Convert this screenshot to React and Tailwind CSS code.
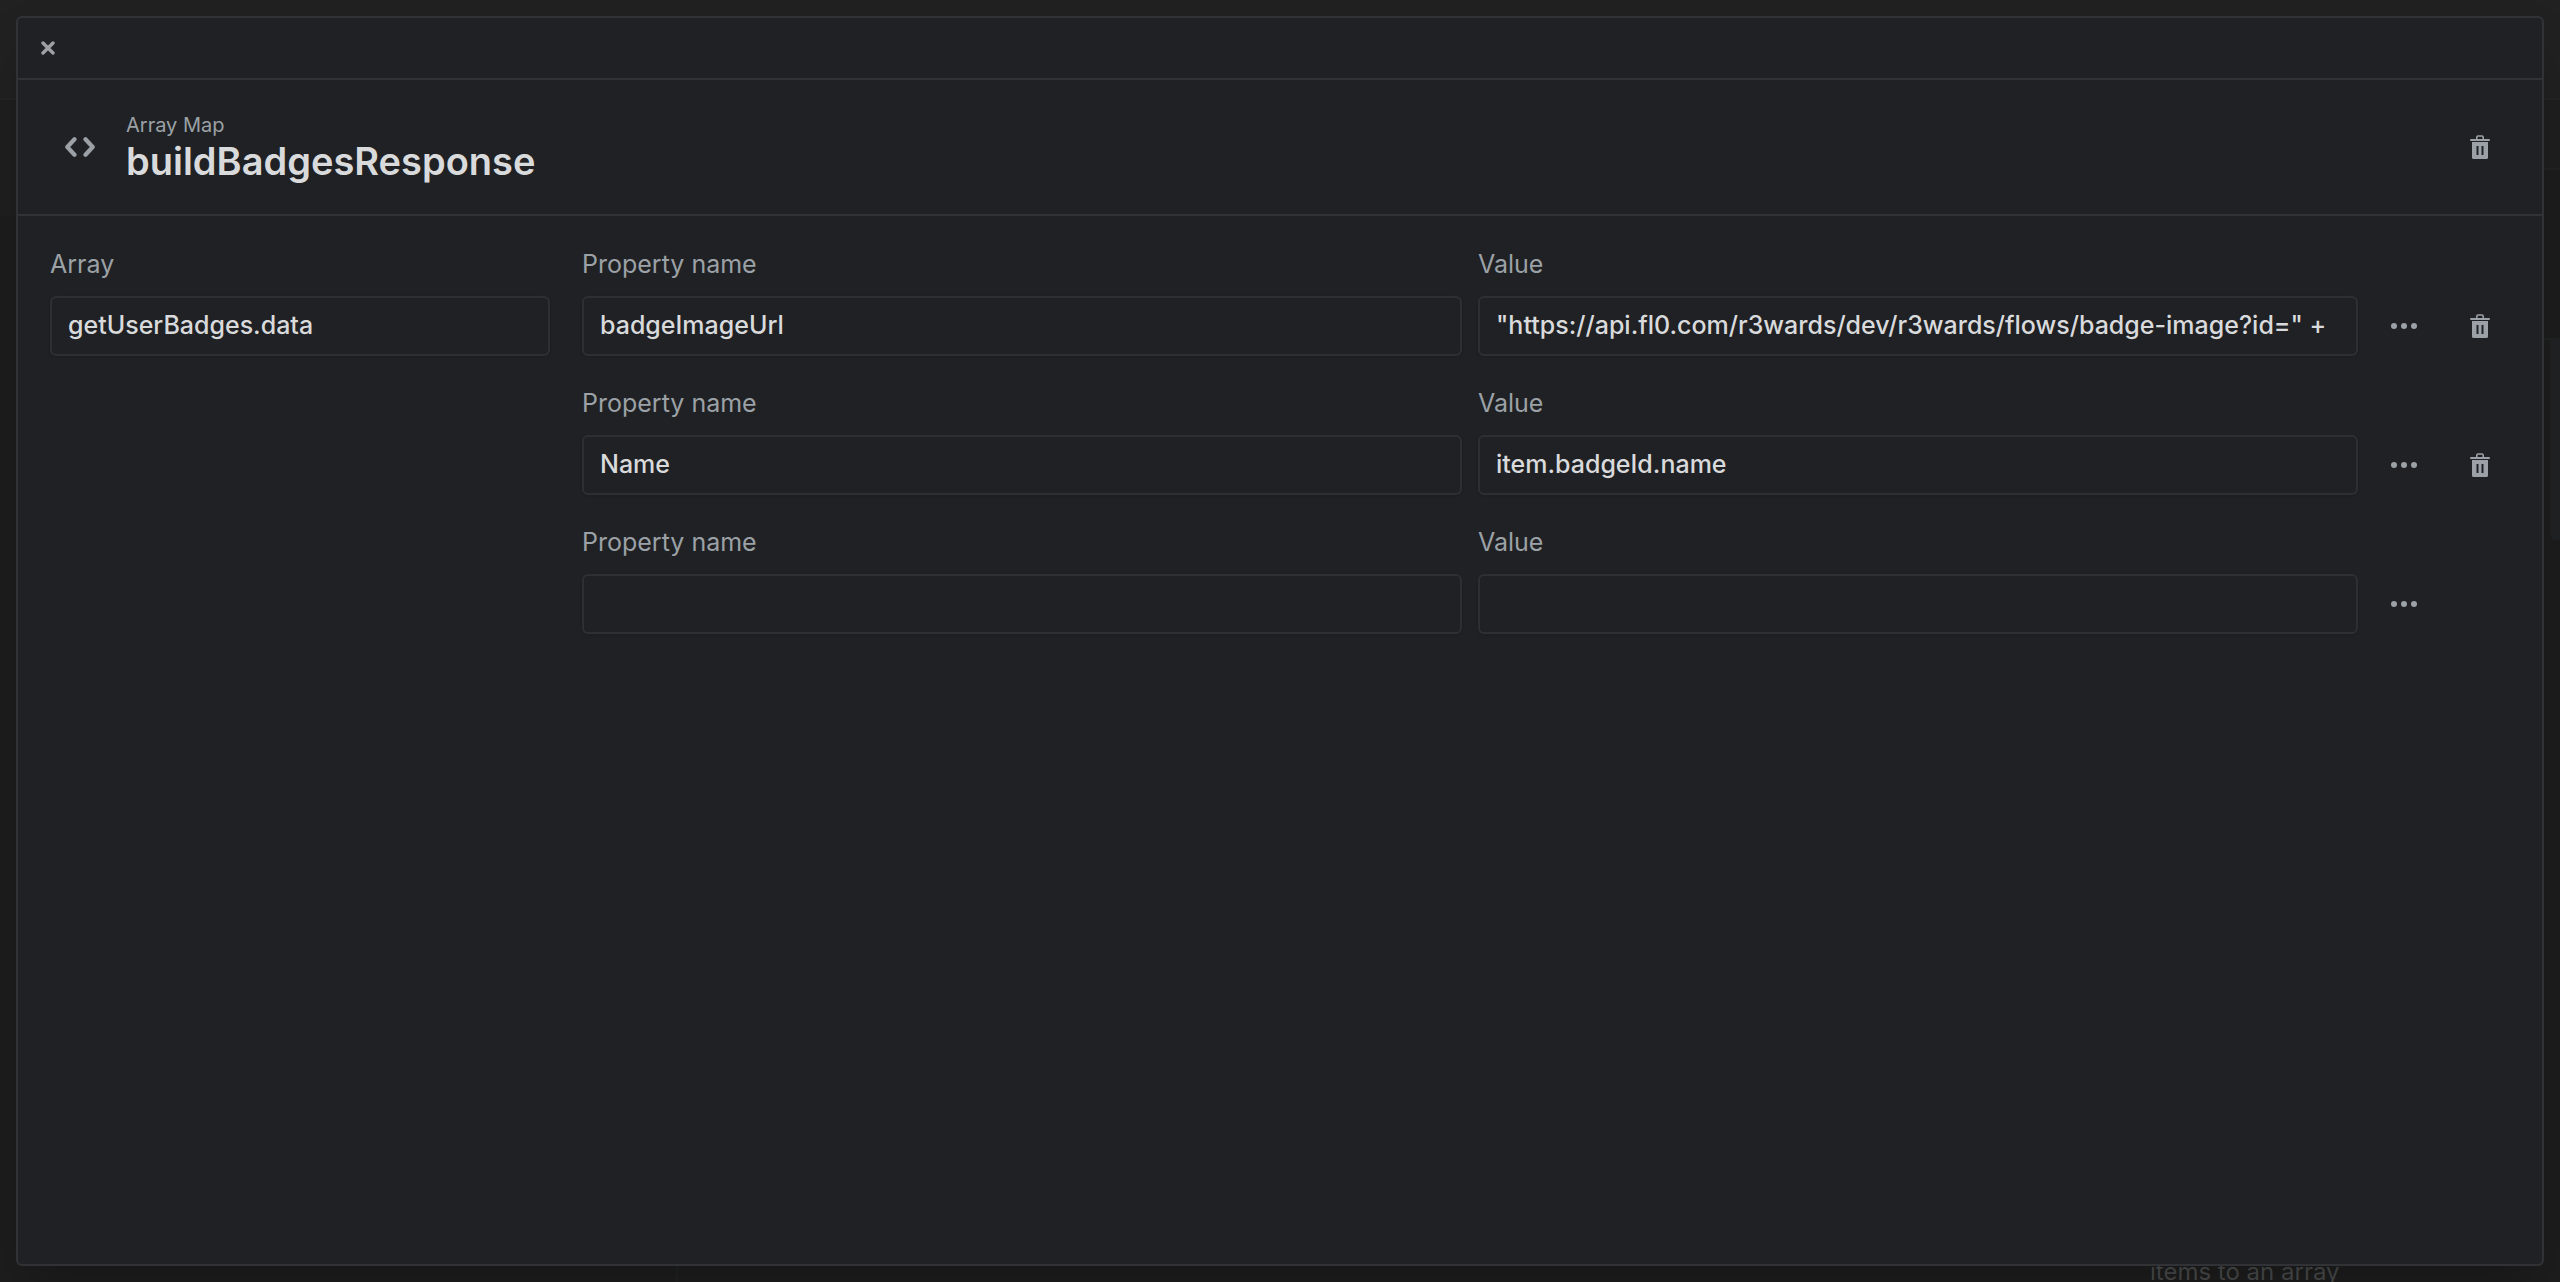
import { useState } from "react";

function CloseIcon() {
  return (
    <svg width="14" height="14" viewBox="0 0 14 14" fill="none" stroke="currentColor" strokeWidth="3.400" strokeLinecap="round">
      <path d="M2 2l10 10M12 2L2 12" />
    </svg>
  );
}

function CodeIcon() {
  return (
    <svg width="30" height="20" viewBox="0 0 30 20" fill="none" stroke="currentColor" strokeWidth="4.200" strokeLinecap="round" strokeLinejoin="round">
      <path d="M9.500 2.300L2.300 10l7.200 7.700M20.500 2.300l7.200 7.700-7.200 7.700" />
    </svg>
  );
}

function TrashIcon() {
  return (
    <svg width="20" height="24" viewBox="0 0 20 24" fill="currentColor">
      <path d="M6.800 4V2.300C6.800 1.500 7.300 1 8.100 1h3.800c.8 0 1.300.5 1.300 1.300V4" fill="none" stroke="currentColor" strokeWidth="1.600" />
      <rect x="0" y="4" width="20" height="2" rx="1" />
      <path fillRule="evenodd" d="M2 7h16v15.500a1.500 1.500 0 0 1-1.500 1.500h-13A1.500 1.500 0 0 1 2 22.500zM6.500 11v9h2v-9zM11.500 11v9h2v-9z" />
    </svg>
  );
}

function DotsIcon() {
  return (
    <svg width="26" height="6" viewBox="0 0 26 6" fill="currentColor">
      <circle cx="3" cy="3" r="3" />
      <circle cx="13" cy="3" r="3" />
      <circle cx="23" cy="3" r="3" />
    </svg>
  );
}

function IconButton({ label, onClick, children }) {
  return (
    <button
      type="button"
      aria-label={label}
      onClick={onClick}
      className="flex h-[60px] w-[60px] shrink-0 items-center justify-center rounded-md text-[#9ba1a6] hover:bg-[#2a2b30]"
    >
      {children}
    </button>
  );
}

function Field({ id, label, value, onChange }) {
  return (
    <div className="flex min-w-0 flex-1 flex-col">
      <label htmlFor={id} className="mb-4 text-[25px] leading-8 text-[#9ba1a6]">
        {label}
      </label>
      <input
        id={id}
        type="text"
        value={value}
        onChange={(e) => onChange(e.target.value)}
        className="h-[60px] w-full rounded-md border-2 border-[#2e2f34] bg-transparent px-4 pb-[2px] text-[25px] font-medium text-[#d9dadc] shadow-sm outline-none focus:border-[#4a4c53]"
      />
    </div>
  );
}

// dimmed editor page that shows around the dialog
function Backdrop() {
  return (
    <div className="absolute inset-0 flex flex-col overflow-hidden bg-[#1c1d1c]">
      <div className="h-[100px] shrink-0 border-b-2 border-[#232424] bg-[#202120]" />
      <div className="flex h-[240px] shrink-0">
        <div className="h-[116px] flex-1 bg-[#1e1f1e]" />
        <div className="w-[40px] border-b-2 border-[#212222]">
          <div className="h-[70px] border-b-2 border-[#222323] bg-[#1e1f1e]" />
        </div>
      </div>
      <div className="ml-auto h-[200px] w-[10px] shrink-0 rounded-bl-md bg-[#212224]" />
      <div className="flex flex-1 items-end">
        <div className="h-full w-[678px] border-r-2 border-[#202121]" />
        <p className="ml-auto w-[410px] text-[24px] leading-5 text-[#48494a]">items to an array</p>
      </div>
    </div>
  );
}

export default function App() {
  const [array, setArray] = useState("getUserBadges.data");
  const [rows, setRows] = useState([
    { name: "badgeImageUrl", value: '"https://api.fl0.com/r3wards/dev/r3wards/flows/badge-image?id=" +' },
    { name: "Name", value: "item.badgeId.name" },
    { name: "", value: "" },
  ]);

  const updateRow = (index, key, text) => {
    setRows(rows.map((row, i) => (i === index ? { ...row, [key]: text } : row)));
  };

  const removeRow = (index) => {
    setRows(rows.filter((_, i) => i !== index));
  };

  return (
    <div className="relative flex h-screen overflow-hidden p-4 font-['Inter',sans-serif]">
      <Backdrop />

      <div role="dialog" aria-label="buildBadgesResponse" className="relative flex min-w-0 flex-1 flex-col rounded-md border-2 border-[#313236] bg-[#202124] shadow-2xl">
        <div className="flex h-[62px] items-center border-b-2 border-[#313236] px-4">
          <button type="button" aria-label="Close" className="flex h-7 w-7 items-center justify-center text-[#9ba1a6]">
            <CloseIcon />
          </button>
        </div>

        <header className="flex h-[136px] items-center border-b-2 border-[#313236] px-8">
          <div className="flex w-[60px] justify-center text-[#9ba1a6]">
            <CodeIcon />
          </div>
          <div className="ml-4 flex-1">
            <p className="text-[20px] leading-7 text-[#9ba1a6]">Array Map</p>
            <h1 className="text-[38px] leading-11 font-semibold text-[#d9dadc]">buildBadgesResponse</h1>
          </div>
          <IconButton label="Delete node">
            <TrashIcon />
          </IconButton>
        </header>

        <div className="flex gap-8 p-8">
          <div className="flex w-[500px] shrink-0">
            <Field id="array" label="Array" value={array} onChange={setArray} />
          </div>

          <div className="flex min-w-0 flex-1 flex-col gap-[31px]">
            {rows.map((row, i) => (
              <div key={i} className="flex items-end gap-4">
                <Field id={`name-${i}`} label="Property name" value={row.name} onChange={(t) => updateRow(i, "name", t)} />
                <Field id={`value-${i}`} label="Value" value={row.value} onChange={(t) => updateRow(i, "value", t)} />
                <IconButton label="More options">
                  <DotsIcon />
                </IconButton>
                {i < rows.length - 1 ? (
                  <IconButton label="Delete property" onClick={() => removeRow(i)}>
                    <TrashIcon />
                  </IconButton>
                ) : (
                  <div className="w-[60px] shrink-0" />
                )}
              </div>
            ))}
          </div>
        </div>
      </div>
    </div>
  );
}
